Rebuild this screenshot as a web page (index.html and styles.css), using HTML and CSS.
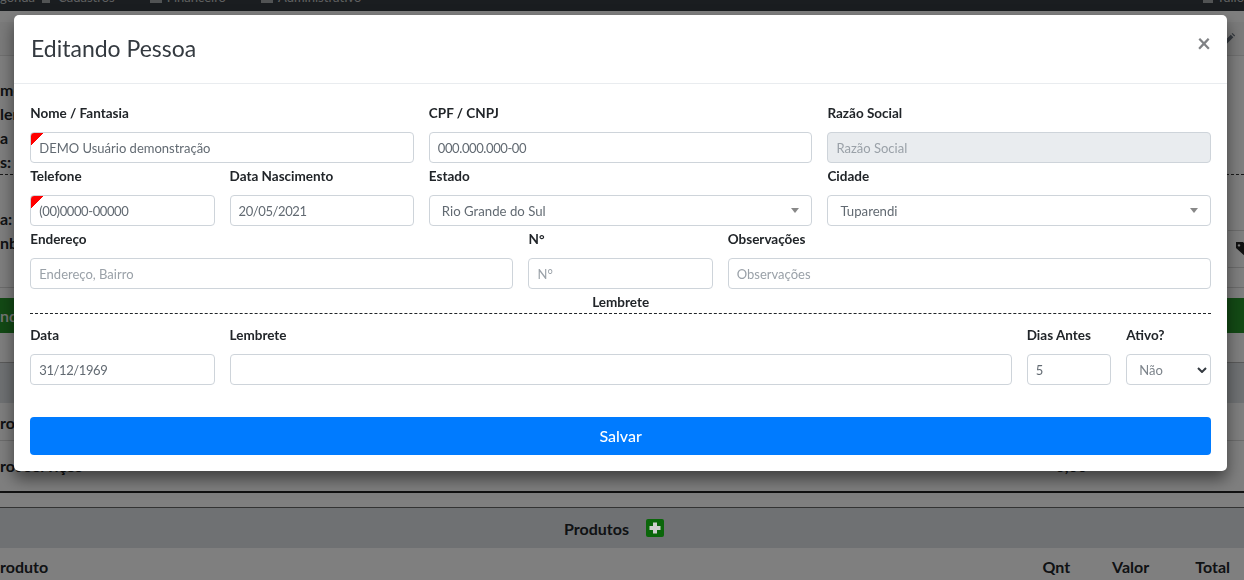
FILE: index.html
```html
<!DOCTYPE html>
<html lang="pt-BR">
<head>
  <meta charset="UTF-8" />
  <meta name="viewport" content="width=device-width, initial-scale=1.0"/>
  <title>Editando Pessoa</title>
  <link rel="stylesheet" href="styles.css">
</head>
<body>

<!-- pagina atras do modal -->
<div class="page">
  <nav class="navbar">
    <div class="nav-items">
      <span class="nav-first">gonda</span>
      <span class="nav-ico ico-pen"></span>
      <span class="nav-link">Cadastros</span>
      <span class="nav-caret"></span>
      <span class="nav-ico ico-box"></span>
      <span class="nav-link">Financeiro</span>
      <span class="nav-caret"></span>
      <span class="nav-ico ico-box"></span>
      <span class="nav-link">Administrativo</span>
      <span class="nav-caret"></span>
      <span class="nav-user"><span class="nav-ico ico-user"></span>Tulio</span>
    </div>
  </nav>

  <div class="card-head">
    <svg class="pen" viewBox="0 0 16 16"><path d="M2 11 10 3l3 3-8 8H2zM11 2l1-1 3 3-1 1z"/></svg>
  </div>

  <div class="info">
    <div class="info-line">me</div>
    <div class="info-line">ler</div>
    <div class="info-line">a</div>
    <div class="info-line">s:</div>
    <div class="dashed"></div>
    <div class="info-foot">
      <div>
        <div class="info-line">a:</div>
        <div class="info-line">nb</div>
      </div>
      <div class="tag-cell">
        <svg class="tag" viewBox="0 0 16 16"><path d="M0 1h7l9 9-6 6-10-9zM3 3.2a1.2 1.2 0 1 0 .01 0z" fill-rule="evenodd"/></svg>
      </div>
    </div>
  </div>

  <div class="green-bar">nd</div>
  <div class="band-top"></div>
  <div class="band"></div>
  <div class="tot-row">rot</div>
  <div class="tot-row tot-last">
    <span>rot serviços</span>
    <span class="tot-val">0,00</span>
  </div>
  <div class="spacer"></div>
  <div class="prod-head">
    Produtos
    <svg class="plus" viewBox="0 0 18 18"><rect width="18" height="18" rx="2" fill="#0a660a"/><path d="M7 3.500h4V7h3.500v4H11v3.500H7V11H3.500V7H7z" fill="#cfcfcf"/></svg>
  </div>
  <div class="prod-cols">
    <span class="col-prod">roduto</span>
    <span class="col-qnt">Qnt</span>
    <span class="col-valor">Valor</span>
    <span class="col-total">Total</span>
  </div>
</div>

<div class="backdrop"></div>

<div class="modal-wrap">
  <div class="modal">
    <div class="modal-header">
      <h5>Editando Pessoa</h5>
      <span class="close">&times;</span>
    </div>
    <div class="modal-body">
      <div class="form-row">
        <div class="col-4">
          <label>Nome / Fantasia</label>
          <input class="form-control required" type="text" value="DEMO Usuário demonstração" />
        </div>
        <div class="col-4">
          <label>CPF / CNPJ</label>
          <input class="form-control num" type="text" value="000.000.000-00" />
        </div>
        <div class="col-4">
          <label>Razão Social</label>
          <input class="form-control" type="text" placeholder="Razão Social" disabled />
        </div>
      </div>

      <div class="form-row">
        <div class="col-2">
          <label>Telefone</label>
          <input class="form-control num required" type="text" value="(00)0000-00000" />
        </div>
        <div class="col-2">
          <label>Data Nascimento</label>
          <input class="form-control num" type="text" value="20/05/2021" />
        </div>
        <div class="col-4">
          <label>Estado</label>
          <div class="select-box">Rio Grande do Sul<span class="arrow"></span></div>
        </div>
        <div class="col-4">
          <label>Cidade</label>
          <div class="select-box">Tuparendi<span class="arrow"></span></div>
        </div>
      </div>

      <div class="form-row">
        <div class="col-5">
          <label>Endereço</label>
          <input class="form-control" type="text" placeholder="Endereço, Bairro" />
        </div>
        <div class="col-2">
          <label>N°</label>
          <input class="form-control" type="text" placeholder="N°" />
        </div>
        <div class="col-5">
          <label>Observações</label>
          <input class="form-control" type="text" placeholder="Observações" />
        </div>
      </div>

      <div class="divider">Lembrete</div>

      <div class="form-row">
        <div class="col-2">
          <label>Data</label>
          <input class="form-control num" type="text" value="31/12/1969" />
        </div>
        <div class="col-8">
          <label>Lembrete</label>
          <input class="form-control" type="text" />
        </div>
        <div class="col-1">
          <label>Dias Antes</label>
          <input class="form-control" type="text" value="5" />
        </div>
        <div class="col-1">
          <label>Ativo?</label>
          <select class="form-control">
            <option>Não</option>
            <option>Sim</option>
          </select>
        </div>
      </div>

      <button class="btn-save">Salvar</button>
    </div>
  </div>
</div>

</body>
</html>
```

FILE: styles.css
```css
html, body {
  height: 100%;
  margin: 0;
  overflow: hidden;
  background-color: #fff;
  font-family: "Lato", "Noto Sans", sans-serif;
  color: #212529;
}

/* pagina de fundo */
.page {
  height: 580px;
  overflow: hidden;
}

.navbar {
  height: 11px;
  overflow: hidden;
  background-color: #343a40;
}

.nav-items {
  display: flex;
  align-items: center;
  height: 20px;
  margin-top: -13px;
  font-size: 13px;
  color: rgba(255, 255, 255, 0.7);
}

.nav-first {
  width: 42px;
}

.nav-ico {
  display: inline-block;
  height: 12px;
  background-color: rgba(255, 255, 255, 0.55);
}

.ico-pen {
  width: 8px;
  margin-right: 8px;
}

.ico-box {
  width: 12px;
  margin-right: 5px;
}

.ico-user {
  width: 10px;
  margin-right: 4px;
}

.nav-link {
  white-space: nowrap;
}

.nav-caret {
  width: 0;
  height: 0;
  margin: 0 23px 0 6px;
  border-top: 4px solid rgba(255, 255, 255, 0.7);
  border-left: 3px solid transparent;
  border-right: 3px solid transparent;
}

.nav-user {
  display: flex;
  align-items: center;
  margin-left: auto;
}

.card-head {
  display: flex;
  justify-content: flex-end;
  align-items: center;
  box-sizing: border-box;
  height: 34px;
  margin-top: 11px;
  padding-right: 8px;
  background-color: #f7f7f7;
  border-bottom: 1px solid #e0e0e0;
}

.pen {
  width: 14px;
  height: 14px;
  fill: #6a7580;
}

.info {
  box-sizing: border-box;
  height: 232px;
  padding-top: 22px;
  border-bottom: 1px solid #d8d8d8;
}

.info-line {
  height: 24px;
  line-height: 24px;
  font-size: 16px;
  font-weight: 700;
}

.dashed {
  border-top: 1px dashed #333;
}

.info-foot {
  display: flex;
  justify-content: space-between;
  margin-top: 32px;
}

.tag-cell {
  box-sizing: border-box;
  width: 16px;
  height: 38px;
  margin-top: 23px;
  padding: 10px 0 0 8px;
  border-top: 1px solid #d8d8d8;
  border-bottom: 1px solid #d8d8d8;
}

.tag {
  display: block;
  width: 16px;
  height: 16px;
  fill: #222;
}

.green-bar {
  box-sizing: border-box;
  height: 35px;
  margin-top: 10px;
  line-height: 35px;
  font-size: 16px;
  font-weight: 600;
  background-color: #27952a;
  color: #f0f0f0;
}

.band-top {
  height: 30px;
  border-bottom: 1px solid #b5b5b5;
  box-sizing: border-box;
}

.band {
  height: 40px;
  background-color: #dee2e6;
}

.tot-row {
  display: flex;
  justify-content: space-between;
  box-sizing: border-box;
  height: 38px;
  padding-top: 9px;
  line-height: 22px;
  font-size: 16px;
  font-weight: 700;
  border-bottom: 1px solid #d8d8d8;
}

.tot-last {
  height: 52px;
  padding-top: 14px;
  border-bottom: 2px solid #222;
}

.tot-val {
  margin-right: 157px;
}

.spacer {
  height: 14px;
  border-bottom: 1px solid #666;
}

.prod-head {
  display: flex;
  justify-content: center;
  align-items: center;
  gap: 17px;
  height: 40px;
  padding-right: 16px;
  font-size: 16px;
  font-weight: 700;
  background-color: #dee2e6;
}

.plus {
  position: relative;
  z-index: 20;
  width: 18px;
  height: 18px;
}

.prod-cols {
  display: flex;
  align-items: center;
  height: 36px;
  font-size: 16px;
  font-weight: 700;
}

.col-qnt {
  margin-left: auto;
}

.col-valor {
  margin-left: 42px;
}

.col-total {
  margin-left: 46px;
  margin-right: 14px;
}

/* modal */
.backdrop {
  position: fixed;
  top: 0;
  left: 0;
  right: 0;
  bottom: 0;
  z-index: 10;
  background-color: rgba(0, 0, 0, 0.5);
}

.modal-wrap {
  position: fixed;
  top: 0;
  left: 0;
  right: 0;
  bottom: 0;
  z-index: 30;
  padding: 15px 0 0 14px;
}

.modal {
  width: 1213px;
  background-color: #fff;
  border-radius: 5px;
  box-shadow: 0 8px 16px rgba(0, 0, 0, 0.5);
}

.modal-header {
  display: flex;
  justify-content: space-between;
  box-sizing: border-box;
  height: 69px;
  padding: 15px 16px 0 17px;
  border-bottom: 1px solid #e9ecef;
}

.modal-header h5 {
  margin: 0;
  font-size: 23px;
  font-weight: 400;
  line-height: 36px;
  color: #343a40;
}

.close {
  font-size: 24px;
  font-weight: 700;
  line-height: 26px;
  color: #808285;
}

.modal-body {
  padding: 19px 16px 16px 16.28px;
}

.form-row {
  display: grid;
  grid-template-columns: repeat(12, minmax(0, 1fr));
  column-gap: 15px;
  margin-bottom: 3px;
}

.col-1 { grid-column: span 1; }
.col-2 { grid-column: span 2; }
.col-4 { grid-column: span 4; }
.col-5 { grid-column: span 5; }
.col-8 { grid-column: span 8; }

label {
  display: block;
  margin-bottom: 9px;
  font-size: 13.5px;
  font-weight: 700;
  line-height: 20px;
  color: #212529;
}

.form-control {
  display: block;
  box-sizing: border-box;
  width: 100%;
  height: 31px;
  padding: 0 8px;
  font-family: inherit;
  font-size: 13px;
  color: #626a72;
  background-color: #fff;
  border: 1px solid #ced4da;
  border-radius: 4px;
}

.num {
  letter-spacing: -0.4px;
}

.form-control::placeholder {
  color: #9aa1a8;
  opacity: 1;
}

.form-control:disabled {
  background-color: #e9ecef;
}

select.form-control {
  appearance: none;
  padding: 0 12px;
  color: #7d848b;
  background-image: url("data:image/svg+xml,%3Csvg xmlns='http://www.w3.org/2000/svg' viewBox='0 0 10 6'%3E%3Cpath d='M1 1l4 4 4-4' fill='none' stroke='%23343a40' stroke-width='2'/%3E%3C/svg%3E");
  background-repeat: no-repeat;
  background-position: right 3px center;
  background-size: 10px 6px;
}

/* triangulo vermelho de campo obrigatorio */
.required {
  background-image: linear-gradient(135deg, #f00 9px, transparent 9px);
}

.select-box {
  display: flex;
  align-items: center;
  justify-content: space-between;
  box-sizing: border-box;
  height: 31px;
  padding: 0 12px;
  font-size: 13.2px;
  color: #626a72;
  background-color: #fff;
  border: 1px solid #ced4da;
  border-radius: 4px;
}

.arrow {
  width: 0;
  height: 0;
  border-top: 5px solid #888;
  border-left: 4px solid transparent;
  border-right: 4px solid transparent;
}

.divider {
  margin-bottom: 11px;
  font-size: 13.5px;
  font-weight: 700;
  line-height: 21px;
  text-align: center;
  color: #212529;
  border-bottom: 1px dashed #212529;
}

.btn-save {
  display: block;
  width: 100%;
  height: 38px;
  margin-top: 32px;
  padding-bottom: 3px;
  font-family: inherit;
  font-size: 16px;
  font-weight: 500;
  color: #fff;
  background-color: #007bff;
  border: none;
  border-radius: 4px;
}
```
